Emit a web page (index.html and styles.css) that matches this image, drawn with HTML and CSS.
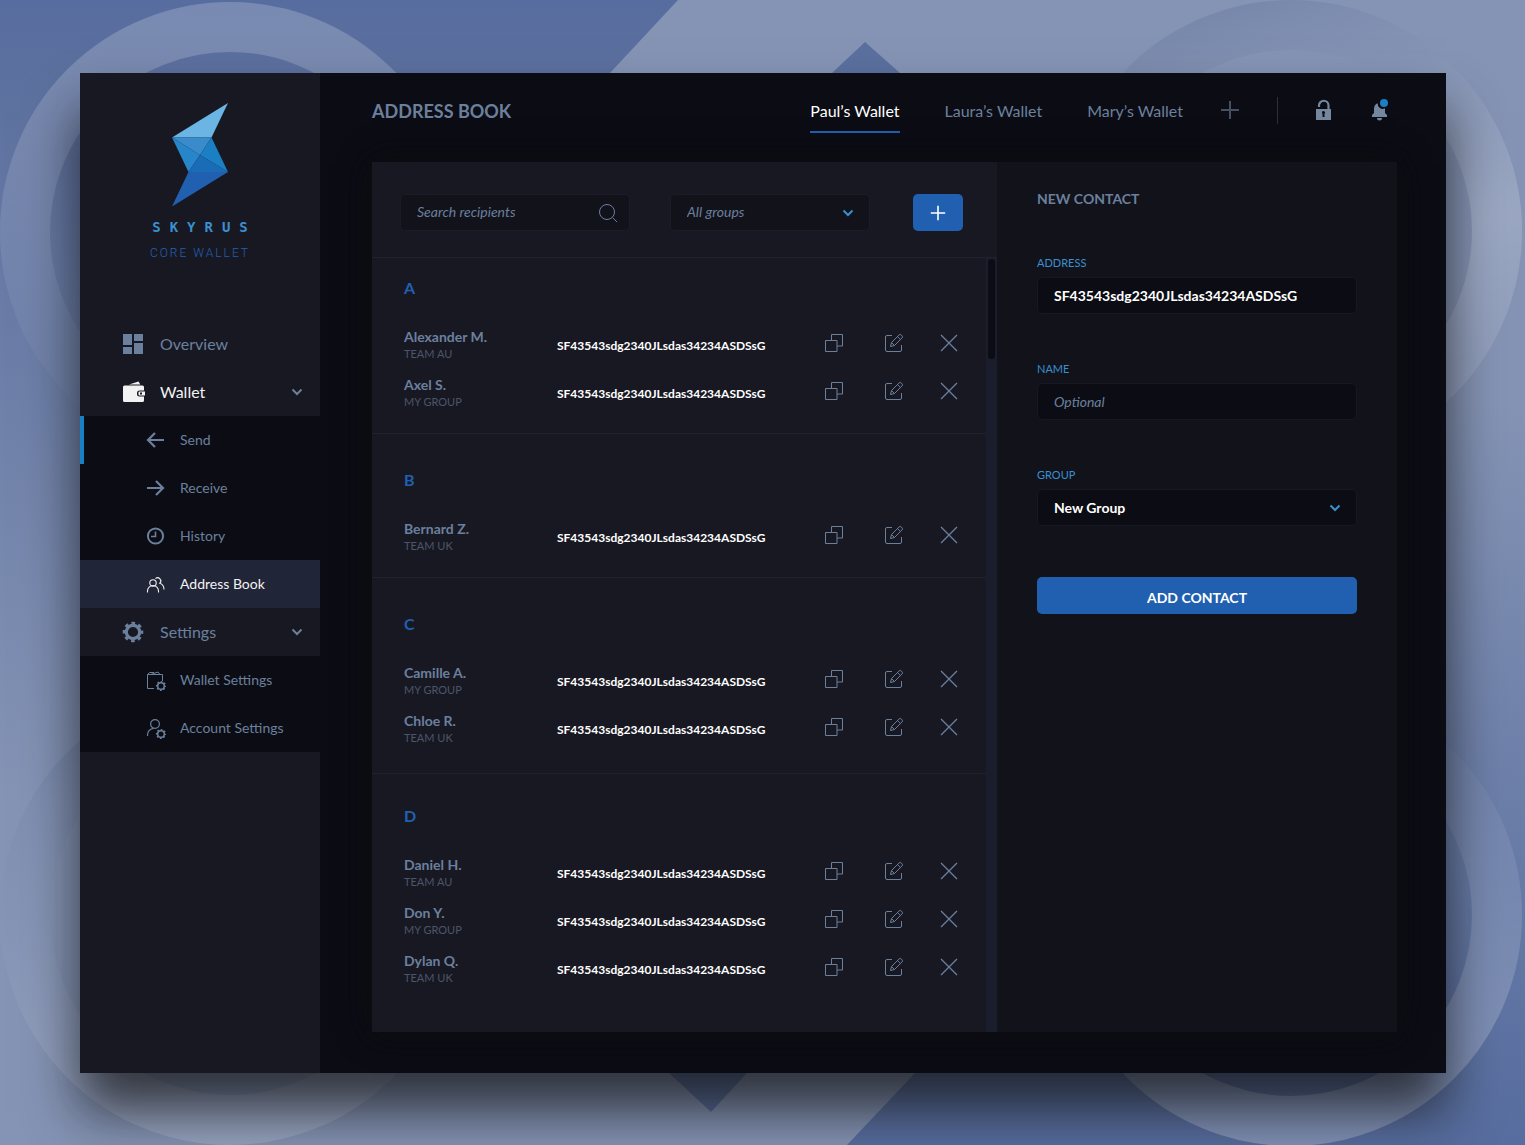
FILE: index.html
```html
<!DOCTYPE html>
<html lang="en">
<head>
<meta charset="utf-8">
<meta name="viewport" content="width=device-width, initial-scale=1">
<title>Skyrus Core Wallet – Address Book</title>
<link rel="stylesheet" href="styles.css">
</head>
<body class="page">

<svg class="sprite" aria-hidden="true" width="0" height="0">
  <symbol id="i-copy" viewBox="0 0 20 20"><path d="M1.500 7.500h11.500v11h-11.500z M7.500 7.500v-6h11v11.500h-5.500" fill="none" stroke="currentColor"/></symbol>
  <symbol id="i-edit" viewBox="0 0 20 20"><path d="M8 2.500H3a1.500 1.500 0 0 0-1.500 1.500v13a1.500 1.500 0 0 0 1.500 1.500h13a1.500 1.500 0 0 0 1.500-1.500V12" fill="none" stroke="currentColor"/><path d="M6.500 13.500l1-4 7.300-7.300a1.900 1.900 0 0 1 2.800 0l.2.2a1.900 1.900 0 0 1 0 2.800l-7.300 7.300zM7.500 9.500l3 3M13.500 3.500l3 3" fill="none" stroke="currentColor"/></symbol>
  <symbol id="i-close" viewBox="0 0 20 20"><path d="M2 2l16 16M18 2L2 18" fill="none" stroke="currentColor" stroke-width="1.300"/></symbol>
  <symbol id="i-chevron" viewBox="0 0 12 8"><path d="M1.500 1.500L6 6l4.500-4.500" fill="none" stroke="currentColor" stroke-width="2"/></symbol>
  <symbol id="i-plus" viewBox="0 0 20 20"><path d="M10 1v18M1 10h18" fill="none" stroke="currentColor" stroke-width="2"/></symbol>
  <symbol id="i-gear" viewBox="0 0 22 22"><circle cx="11" cy="11" r="6.700" fill="none" stroke="currentColor" stroke-width="3.200"/><circle cx="11" cy="11" r="8.900" fill="none" stroke="currentColor" stroke-width="2.800" stroke-dasharray="3.600 3.390" stroke-dashoffset="1.800"/></symbol>
</svg>

<svg class="backdrop" viewBox="0 0 1525 1145" preserveAspectRatio="xMidYMid slice" aria-hidden="true">
  <defs>
    <linearGradient id="down" x1="0" y1="0" x2="0" y2="1"><stop offset="0" stop-color="#576d9f"/><stop offset=".06" stop-color="#5c709f"/><stop offset=".7" stop-color="#8594b5"/><stop offset="1" stop-color="#8594b5"/></linearGradient>
    <linearGradient id="up" x1="0" y1="0" x2="0" y2="1"><stop offset="0" stop-color="#8594b5"/><stop offset=".35" stop-color="#8594b5"/><stop offset="1" stop-color="#576d9f"/></linearGradient>
    <linearGradient id="ringLight" x1="0" y1="0" x2="0" y2="1"><stop offset="0" stop-color="#fff" stop-opacity=".2"/><stop offset="1" stop-color="#fff" stop-opacity="0"/></linearGradient>
    <linearGradient id="ringTurn" x1="0" y1="0" x2=".3" y2="1"><stop offset="0" stop-color="#53658f" stop-opacity=".36"/><stop offset=".3" stop-color="#8594b5" stop-opacity=".2"/><stop offset=".7" stop-color="#fff" stop-opacity=".18"/><stop offset="1" stop-color="#fff" stop-opacity=".1"/></linearGradient>
    <linearGradient id="ringLow" x1="0" y1="0" x2="0" y2="1"><stop offset="0" stop-color="#53658f" stop-opacity=".3"/><stop offset=".5" stop-color="#8594b5" stop-opacity=".1"/><stop offset="1" stop-color="#fff" stop-opacity=".14"/></linearGradient>
    <linearGradient id="ringEnd" x1="0" y1="0" x2="0" y2="1"><stop offset="0" stop-color="#fff" stop-opacity="0"/><stop offset="1" stop-color="#fff" stop-opacity=".25"/></linearGradient>
  </defs>
  <path d="M0 0H1525V1145H0z" fill="url(#down)"/>
  <path d="M678 0H1525V1145H847L915 1073L763 573L610 73z" fill="url(#up)"/>
  <path d="M865 42L900 73L865 104L832 73z" fill="#5b709f"/>
  <path d="M669 1073L708 1040L747 1073L711 1112z" fill="#5b709f"/>
  <g fill="none" stroke-width="50">
    <circle cx="230" cy="232" r="205" stroke="url(#ringLight)"/>
    <circle cx="1291" cy="231" r="206" stroke="url(#ringTurn)"/>
    <circle cx="230" cy="915" r="205" stroke="url(#ringLow)"/>
    <circle cx="1291" cy="915" r="206" stroke="url(#ringEnd)"/>
  </g>
</svg>

<div class="app">
  <aside class="sidebar">
    <a class="brand" href="#">
      <svg class="brand-mark" viewBox="0 0 56 104" aria-hidden="true">
        <path d="M56 0L39.500 34.500H0z" fill="#6bb5e4"/>
        <path d="M0 34.500H39.500L28 52z" fill="#398bcb"/>
        <path d="M0 34.500L28 52L16.500 69z" fill="#2786ca"/>
        <path d="M39.500 34.500L56 69L28 52z" fill="#1b7fc3"/>
        <path d="M28 52L56 69H16.500z" fill="#1a6cb6"/>
        <path d="M16.500 69H56L0 103.500z" fill="#2160b0"/>
      </svg>
      <span class="brand-name">SKYRUS</span>
      <span class="brand-product">CORE WALLET</span>
    </a>

    <nav class="menu" aria-label="Main">
      <a class="menu-item" href="#">
        <svg class="menu-icon" viewBox="0 0 22 22" aria-hidden="true"><path d="M1 1h9v11H1zM12 1h9v7h-9zM1 14h9v7H1zM12 10h9v11h-9z" fill="currentColor"/></svg>
        <span class="menu-text">Overview</span>
      </a>
      <a class="menu-item menu-item-open" href="#">
        <svg class="menu-icon menu-icon-wide" viewBox="0 0 24 22" aria-hidden="true"><path d="M7 3.500L16.500 .5l1.800 3z" fill="currentColor"/><path d="M2.500 4.500h18a1.500 1.500 0 0 1 1.500 1.500v3.500h-4.500a2.500 2.500 0 0 0-2.500 2.500v1a2.500 2.500 0 0 0 2.500 2.500H22v4a1.500 1.500 0 0 1-1.500 1.500h-18A1.500 1.500 0 0 1 1 19.500V6a1.500 1.500 0 0 1 1.500-1.500z" fill="currentColor"/><path d="M17.500 10.500H23v4h-5.500a1 1 0 0 1-1-1v-2a1 1 0 0 1 1-1z" fill="currentColor"/><path d="M18 11.500h2v2h-2z" fill="#181823"/></svg>
        <span class="menu-text">Wallet</span>
        <svg class="menu-chevron" aria-hidden="true"><use href="#i-chevron"/></svg>
      </a>
      <div class="submenu">
        <a class="submenu-item submenu-item-marked" href="#">
          <svg class="submenu-icon" viewBox="0 0 20 20" aria-hidden="true"><path d="M9 3L2 10l7 7M2 10h16" fill="none" stroke="currentColor" stroke-width="2.200"/></svg>
          <span class="menu-text">Send</span>
        </a>
        <a class="submenu-item" href="#">
          <svg class="submenu-icon" viewBox="0 0 20 20" aria-hidden="true"><path d="M10 3l7 7-7 7M17 10H1" fill="none" stroke="currentColor" stroke-width="2.200"/></svg>
          <span class="menu-text">Receive</span>
        </a>
        <a class="submenu-item" href="#">
          <svg class="submenu-icon" viewBox="0 0 20 20" aria-hidden="true"><circle cx="9.500" cy="10" r="7.600" fill="none" stroke="currentColor" stroke-width="2"/><path d="M9.500 5.500v5H5" fill="none" stroke="currentColor" stroke-width="1.600"/></svg>
          <span class="menu-text">History</span>
        </a>
        <a class="submenu-item submenu-item-active" href="#" aria-current="page">
          <svg class="submenu-icon" viewBox="0 0 20 20" aria-hidden="true"><g fill="none" stroke="currentColor" stroke-width="1.100"><circle cx="7" cy="9" r="3.200"/><path d="M1.500 18.500v-1.500a5.500 5.500 0 0 1 11 0v1.500M9.500 4.700a3.100 3.100 0 1 1 4.300 4.500c2.600.9 4.200 3 4.200 6.300"/></g></svg>
          <span class="menu-text">Address Book</span>
        </a>
      </div>
      <a class="menu-item" href="#">
        <svg class="menu-icon" aria-hidden="true"><use href="#i-gear"/></svg>
        <span class="menu-text">Settings</span>
        <svg class="menu-chevron" aria-hidden="true"><use href="#i-chevron"/></svg>
      </a>
      <div class="submenu">
        <a class="submenu-item" href="#">
          <svg class="submenu-icon" viewBox="0 0 20 20" aria-hidden="true"><path d="M8 18.500H1.500V4.500h15V11M1.500 4.500l2-2H8M5 4.500l7-2.500 2 2.500" fill="none" stroke="currentColor"/><circle cx="15" cy="16" r="3.300" fill="none" stroke="currentColor" stroke-width="1.500"/><circle cx="15" cy="16" r="4.400" fill="none" stroke="currentColor" stroke-width="1.400" stroke-dasharray="1.700 1.756" stroke-dashoffset=".850"/></svg>
          <span class="menu-text">Wallet Settings</span>
        </a>
        <a class="submenu-item" href="#">
          <svg class="submenu-icon" viewBox="0 0 20 20" aria-hidden="true"><circle cx="9" cy="6" r="4.400" fill="none" stroke="currentColor" stroke-width="1.200"/><path d="M1.500 18v-1c0-3.500 2.500-6 6-6.700" fill="none" stroke="currentColor" stroke-width="1.200"/><circle cx="15" cy="16" r="3.300" fill="none" stroke="currentColor" stroke-width="1.500"/><circle cx="15" cy="16" r="4.400" fill="none" stroke="currentColor" stroke-width="1.400" stroke-dasharray="1.700 1.756" stroke-dashoffset=".850"/></svg>
          <span class="menu-text">Account Settings</span>
        </a>
      </div>
    </nav>
  </aside>

  <main class="main">
    <header class="topbar">
      <h1 class="page-title">ADDRESS BOOK</h1>
      <nav class="tabs" aria-label="Wallets">
        <a class="tab tab-active" href="#" aria-current="true">Paul’s Wallet</a>
        <a class="tab" href="#">Laura’s Wallet</a>
        <a class="tab" href="#">Mary’s Wallet</a>
      </nav>
      <div class="tools">
        <button class="icon-button add-wallet" type="button" aria-label="Add wallet"><svg aria-hidden="true"><use href="#i-plus"/></svg></button>
        <button class="icon-button" type="button" aria-label="Lock">
          <svg viewBox="0 0 20 20" aria-hidden="true"><path d="M5 7V5.500a4.500 4.500 0 0 1 9.500 0V9" fill="none" stroke="currentColor" stroke-width="2.200"/><path d="M2 9h15v11H2z" fill="currentColor"/><path d="M8 12.500a1.500 1.500 0 1 1 2.500 1.300V17H8.500v-3.200a1.500 1.500 0 0 1-.5-1.300z" fill="#0b0c14"/></svg>
        </button>
        <button class="icon-button" type="button" aria-label="Notifications">
          <svg viewBox="0 0 20 22" aria-hidden="true"><path d="M2 18v-2l2-2V9.500a5.800 5.800 0 0 1 3.700-5.200 5 5 0 0 0 7.300 5V14l2 2v2zM7 19h5a2.500 2.500 0 0 1-5 0z" fill="currentColor"/><circle cx="14" cy="4" r="4" fill="#1b7fc3"/></svg>
        </button>
      </div>
    </header>

    <div class="panels">
      <section class="contacts" aria-label="Contacts">
        <form class="toolbar">
          <div class="field field-soft">
            <input class="field-control" type="search" placeholder="Search recipients" aria-label="Search recipients">
            <svg class="search-icon" viewBox="0 0 20 20" aria-hidden="true"><circle cx="9" cy="9" r="7.500" fill="none" stroke="currentColor"/><path d="M14.500 14.500L19 19" stroke="currentColor"/></svg>
          </div>
          <div class="field field-soft">
            <select class="field-control field-hint" aria-label="Group filter"><option>All groups</option><option>Team AU</option><option>Team UK</option><option>My group</option></select>
            <svg class="field-chevron" aria-hidden="true"><use href="#i-chevron"/></svg>
          </div>
          <button class="button button-add" type="button" aria-label="Add contact"><svg class="button-plus" aria-hidden="true"><use href="#i-plus"/></svg></button>
        </form>

        <div class="list">
          <table class="contact-table">
            <tbody>
              <tr class="group-row group-row-first"><th colspan="3" scope="rowgroup">A</th></tr>
              <tr><th class="contact" scope="row"><span class="contact-name">Alexander M.</span><span class="contact-group">TEAM AU</span></th><td class="address">SF43543sdg2340JLsdas34234ASDSsG</td><td class="actions"><div class="action-set"><button class="action" type="button" aria-label="Copy"><svg><use href="#i-copy"/></svg></button><button class="action" type="button" aria-label="Edit"><svg><use href="#i-edit"/></svg></button><button class="action" type="button" aria-label="Delete"><svg><use href="#i-close"/></svg></button></div></td></tr>
              <tr><th class="contact" scope="row"><span class="contact-name">Axel S.</span><span class="contact-group">MY GROUP</span></th><td class="address">SF43543sdg2340JLsdas34234ASDSsG</td><td class="actions"><div class="action-set"><button class="action" type="button" aria-label="Copy"><svg><use href="#i-copy"/></svg></button><button class="action" type="button" aria-label="Edit"><svg><use href="#i-edit"/></svg></button><button class="action" type="button" aria-label="Delete"><svg><use href="#i-close"/></svg></button></div></td></tr>
            </tbody>
            <tbody>
              <tr class="group-row"><th colspan="3" scope="rowgroup">B</th></tr>
              <tr><th class="contact" scope="row"><span class="contact-name">Bernard Z.</span><span class="contact-group">TEAM UK</span></th><td class="address">SF43543sdg2340JLsdas34234ASDSsG</td><td class="actions"><div class="action-set"><button class="action" type="button" aria-label="Copy"><svg><use href="#i-copy"/></svg></button><button class="action" type="button" aria-label="Edit"><svg><use href="#i-edit"/></svg></button><button class="action" type="button" aria-label="Delete"><svg><use href="#i-close"/></svg></button></div></td></tr>
            </tbody>
            <tbody class="group-roomy">
              <tr class="group-row"><th colspan="3" scope="rowgroup">C</th></tr>
              <tr><th class="contact" scope="row"><span class="contact-name">Camille A.</span><span class="contact-group">MY GROUP</span></th><td class="address">SF43543sdg2340JLsdas34234ASDSsG</td><td class="actions"><div class="action-set"><button class="action" type="button" aria-label="Copy"><svg><use href="#i-copy"/></svg></button><button class="action" type="button" aria-label="Edit"><svg><use href="#i-edit"/></svg></button><button class="action" type="button" aria-label="Delete"><svg><use href="#i-close"/></svg></button></div></td></tr>
              <tr><th class="contact" scope="row"><span class="contact-name">Chloe R.</span><span class="contact-group">TEAM UK</span></th><td class="address">SF43543sdg2340JLsdas34234ASDSsG</td><td class="actions"><div class="action-set"><button class="action" type="button" aria-label="Copy"><svg><use href="#i-copy"/></svg></button><button class="action" type="button" aria-label="Edit"><svg><use href="#i-edit"/></svg></button><button class="action" type="button" aria-label="Delete"><svg><use href="#i-close"/></svg></button></div></td></tr>
            </tbody>
            <tbody>
              <tr class="group-row"><th colspan="3" scope="rowgroup">D</th></tr>
              <tr><th class="contact" scope="row"><span class="contact-name">Daniel H.</span><span class="contact-group">TEAM AU</span></th><td class="address">SF43543sdg2340JLsdas34234ASDSsG</td><td class="actions"><div class="action-set"><button class="action" type="button" aria-label="Copy"><svg><use href="#i-copy"/></svg></button><button class="action" type="button" aria-label="Edit"><svg><use href="#i-edit"/></svg></button><button class="action" type="button" aria-label="Delete"><svg><use href="#i-close"/></svg></button></div></td></tr>
              <tr><th class="contact" scope="row"><span class="contact-name">Don Y.</span><span class="contact-group">MY GROUP</span></th><td class="address">SF43543sdg2340JLsdas34234ASDSsG</td><td class="actions"><div class="action-set"><button class="action" type="button" aria-label="Copy"><svg><use href="#i-copy"/></svg></button><button class="action" type="button" aria-label="Edit"><svg><use href="#i-edit"/></svg></button><button class="action" type="button" aria-label="Delete"><svg><use href="#i-close"/></svg></button></div></td></tr>
              <tr><th class="contact" scope="row"><span class="contact-name">Dylan Q.</span><span class="contact-group">TEAM UK</span></th><td class="address">SF43543sdg2340JLsdas34234ASDSsG</td><td class="actions"><div class="action-set"><button class="action" type="button" aria-label="Copy"><svg><use href="#i-copy"/></svg></button><button class="action" type="button" aria-label="Edit"><svg><use href="#i-edit"/></svg></button><button class="action" type="button" aria-label="Delete"><svg><use href="#i-close"/></svg></button></div></td></tr>
            </tbody>
          </table>
          <div class="scrollbar" aria-hidden="true"><div class="scrollbar-thumb"></div></div>
        </div>
      </section>

      <form class="new-contact">
        <h2 class="form-title">NEW CONTACT</h2>
        <div class="form-row">
          <label class="form-label" for="address">ADDRESS</label>
          <div class="field"><input class="field-control" id="address" type="text" value="SF43543sdg2340JLsdas34234ASDSsG"></div>
        </div>
        <div class="form-row">
          <label class="form-label" for="name">NAME</label>
          <div class="field"><input class="field-control" id="name" type="text" placeholder="Optional"></div>
        </div>
        <div class="form-row">
          <label class="form-label" for="group">GROUP</label>
          <div class="field">
            <select class="field-control" id="group"><option>New Group</option><option>Team AU</option><option>Team UK</option></select>
            <svg class="field-chevron" aria-hidden="true"><use href="#i-chevron"/></svg>
          </div>
        </div>
        <button class="button button-submit" type="button">ADD CONTACT</button>
      </form>
    </div>
  </main>
</div>
</body>
</html>
```

FILE: styles.css
```css
:root {
  --ink: #0b0c14;
  --panel: #181823;
  --panel-deep: #12121b;
  --line: #1e2130;
  --muted: #6b809d;
  --faint: #4a5669;
  --blue: #2160b0;
  --sky: #3a8fcf;
}

* { box-sizing: border-box; }

.page {
  margin: 0;
  min-height: 100vh;
  display: grid;
  grid-template: minmax(0, 1fr) / minmax(0, 1fr);
  font-family: "Lato", "Liberation Sans", sans-serif;
  color: var(--muted);
}

.sprite { display: none; }

.backdrop,
.app { grid-area: 1 / 1; }

.backdrop {
  width: 100%;
  height: 100%;
  min-height: 0;
  contain: size;
}

a { color: inherit; text-decoration: none; }

button, input, select { font: inherit; }

.app {
  display: flex;
  margin: 73px 79px 72px 80px;
  background: var(--ink);
  box-shadow: 0 38px 50px rgba(14, 14, 14, 0.72);
}

/* Sidebar */
.sidebar {
  flex: 0 0 240px;
  background: var(--panel);
}

.brand {
  display: flex;
  flex-direction: column;
  align-items: center;
  height: 247px;
  padding-top: 30px;
}

.brand-mark {
  width: 56px;
  height: 104px;
}

.brand-name {
  margin: 12px -9px 0 0;
  font: bold 14px/16px "DejaVu Sans Mono", monospace;
  letter-spacing: 9px;
  color: var(--sky);
}

.brand-product {
  margin-top: 10px;
  font: 300 12px/16px "Roboto", sans-serif;
  letter-spacing: 2px;
  color: var(--blue);
}

.menu-item,
.submenu-item {
  display: flex;
  align-items: center;
  height: 48px;
}

.menu-item {
  gap: 16px;
  padding: 0 17px 0 42px;
  font-size: 16px;
}

.menu-item-open { color: #f2f2f2; }

.menu-text { padding-bottom: 2px; }

.menu-icon {
  width: 22px;
  height: 22px;
}

.menu-icon-wide {
  width: 24px;
  margin-right: -2px;
}

.menu-chevron {
  width: 12px;
  height: 8px;
  margin-left: auto;
  color: var(--muted);
}

.submenu { background: #0c0d14; }

.submenu-item {
  gap: 14px;
  padding-left: 66px;
  font-size: 14px;
}

.submenu-item-marked { box-shadow: inset 4px 0 #1b7fc3; }

.submenu-item-active {
  background: #212538;
  color: #f2f2f2;
}

.submenu-icon {
  width: 20px;
  height: 20px;
  overflow: visible;
}

/* Main area */
.main {
  flex: 1;
  min-width: 0;
  display: flex;
  flex-direction: column;
  padding: 0 49px 41px 52px;
}

.topbar {
  display: flex;
  align-items: center;
  height: 89px;
  padding: 0 7px 11px 0;
}

.page-title {
  flex: 1;
  margin: 0;
  padding-bottom: 2px;
  font-size: 18px;
  font-weight: 700;
  line-height: 24px;
}

.tabs {
  display: flex;
  gap: 45px;
  font-size: 16px;
  line-height: 24px;
}

.tab {
  padding: 8px 0;
  border-bottom: 2px solid transparent;
}

.tab-active {
  color: #fff;
  border-color: var(--blue);
}

.tools {
  display: flex;
  align-items: center;
  gap: 36px;
  padding: 0 0 4px 37px;
}

.icon-button {
  padding: 0;
  width: 20px;
  height: 22px;
  border: 0;
  background: none;
  color: #73889f;
}

.icon-button svg {
  display: block;
  width: 20px;
  height: 22px;
}

.add-wallet {
  width: 58px;
  height: 27px;
  border-right: 1px solid #2b303c;
  color: #465064;
}

.panels {
  flex: 1;
  display: flex;
  box-shadow: 0 0 30px rgba(14, 14, 14, 0.8);
}

.contacts {
  flex: 1;
  min-width: 0;
  display: flex;
  flex-direction: column;
  background: var(--panel);
}

.toolbar {
  display: grid;
  grid-template-columns: 23fr 20fr 53px;
  gap: 40px;
  padding: 32px 34px 26px 28px;
  border-bottom: 1px solid var(--line);
}

/* Fields */
.field {
  display: grid;
  grid-template-columns: minmax(0, 1fr) auto;
  align-items: center;
  height: 37px;
  border: 1px solid #171823;
  border-radius: 5px;
  background: #0c0d14;
}

.field-soft {
  border-color: #1b1c28;
  background: var(--panel-deep);
}

.field-control {
  grid-area: 1 / 1 / 2 / 3;
  width: 100%;
  height: 35px;
  padding: 0 16px;
  border: 0;
  background: none;
  appearance: none;
  font-size: 14px;
  font-weight: 700;
  color: #fff;
}

.field-soft .field-control { padding-bottom: 2px; }

.field-control::placeholder,
.field-hint {
  font-style: italic;
  font-weight: 400;
  color: var(--muted);
  opacity: 1;
}

.search-icon,
.field-chevron {
  grid-area: 1 / 2;
  pointer-events: none;
}

.search-icon {
  width: 20px;
  height: 20px;
  margin-right: 11px;
}

.field-chevron {
  width: 12px;
  height: 8px;
  margin-right: 15px;
  color: var(--sky);
}

.button {
  height: 37px;
  padding: 0;
  border: 0;
  border-radius: 5px;
  background: var(--blue);
  color: #fff;
  font-size: 14px;
  font-weight: 700;
}

.button-add {
  width: 50px;
  justify-self: end;
}

.button-plus {
  display: block;
  width: 16px;
  height: 16px;
  margin: 0 auto;
}

/* Contact list */
.list {
  flex: 1;
  display: flex;
  align-items: stretch;
}

.contact-table {
  flex: 1;
  align-self: flex-start;
  border-spacing: 0;
  text-align: left;
}

.contact-table th,
.contact-table td {
  height: 48px;
  padding: 0 0 2px;
}

.contact-table .group-row th {
  height: 81px;
  padding: 0 32px 24px;
  border-top: 1px solid var(--line);
  vertical-align: bottom;
  font-size: 16px;
  line-height: 20px;
  color: var(--blue);
}

.contact-table .group-row-first th {
  height: 64px;
  border-top: 0;
}

.contact-table tr:last-child th,
.contact-table tr:last-child td {
  height: 63px;
  padding-bottom: 17px;
}

/* Longer tail below the group, taken from the heading that follows */
.contact-table .group-roomy tr:last-child th,
.contact-table .group-roomy tr:last-child td {
  height: 67px;
  padding-bottom: 21px;
}

.contact-table .group-roomy + tbody .group-row th { height: 77px; }

.contact-table .contact {
  width: 185px;
  padding-left: 32px;
}

.contact-name,
.contact-group {
  display: block;
}

.contact-name {
  font-size: 14px;
  line-height: 18px;
}

.contact-group {
  font-size: 11px;
  font-weight: 400;
  line-height: 16px;
  color: var(--faint);
}

.address {
  font-size: 12px;
  font-weight: 700;
  color: #fff;
}

.actions { width: 162px; }

.action-set {
  display: grid;
  grid-template-columns: 60px 55px 20px;
  padding-bottom: 4px;
}

.action {
  width: 20px;
  height: 20px;
  padding: 0;
  border: 0;
  background: none;
  color: var(--muted);
}

.action svg {
  display: block;
  width: 20px;
  height: 20px;
}

.scrollbar {
  flex: 0 0 11px;
  padding: 1px 2px;
  background: #1a1e2c;
}

.scrollbar-thumb {
  height: 100px;
  border-radius: 3px;
  background: #0c0d14;
}

/* New contact form */
.new-contact {
  flex: 0 0 400px;
  display: flex;
  flex-direction: column;
  gap: 47px;
  padding: 27px 40px 32px;
  background: var(--panel-deep);
}

.form-title {
  margin: 0;
  font-size: 14px;
  font-weight: 700;
  line-height: 19px;
}

.form-label {
  display: block;
  margin-bottom: 6px;
  font-size: 11px;
  line-height: 16px;
  color: var(--sky);
}

.button-submit {
  margin-top: 4px;
  padding-top: 3px;
}
```
